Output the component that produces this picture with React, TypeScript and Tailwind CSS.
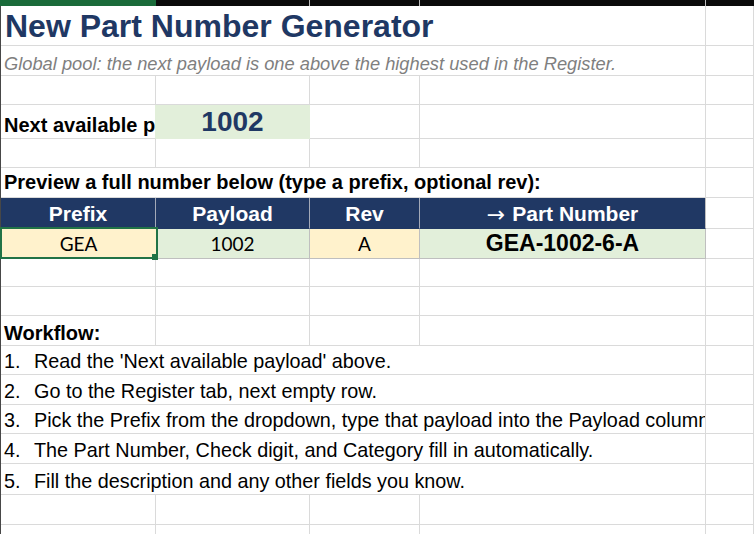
import React from "react";
import { twMerge } from "tailwind-merge";

// column widths incl. right gridline
const A = "w-[155px]";
const B = "w-[154px]";
const C = "w-[110px]";
const D = "w-[286px]";
const AD = "w-[705px]";

type CellProps = {
  w?: string;
  className?: string;
  children?: React.ReactNode;
};

function Cell({ w = "flex-1", className, children }: CellProps) {
  return (
    <div
      className={twMerge(
        "h-full shrink-0 border-r border-b border-[#dadada] flex items-end overflow-hidden whitespace-nowrap",
        w,
        className
      )}
    >
      {children}
    </div>
  );
}

function EmptyRow({ h }: { h: string }) {
  return (
    <div className={`flex ${h}`}>
      <Cell w={A} />
      <Cell w={B} />
      <Cell w={C} />
      <Cell w={D} />
      <Cell />
    </div>
  );
}

const STEPS = [
  "Read the 'Next available payload' above.",
  "Go to the Register tab, next empty row.",
  "Pick the Prefix from the dropdown, type that payload into the Payload column.",
  "The Part Number, Check digit, and Category fill in automatically.",
  "Fill the description and any other fields you know.",
];
const STEP_HEIGHTS = ["h-[29px]", "h-[30px]", "h-[29px]", "h-[30px]", "h-[31px]"];

export default function App() {
  return (
    <div className="w-[754px] h-[534px] overflow-hidden bg-white text-black font-['Liberation_Sans',Arial,sans-serif]">
      {/* column header strip (cut off) */}
      <div className="flex h-[6px] bg-[#0b0b0b]">
        <div className="w-[156px] shrink-0 bg-[#1a6b3a]" />
        <div className="w-[154px] shrink-0 border-r border-[#bdbdbd]" />
        <div className="w-[110px] shrink-0 border-r border-[#bdbdbd]" />
        <div className="w-[286px] shrink-0 border-r border-[#bdbdbd]" />
      </div>

      <div className="border-l border-[#474747]">
        {/* title */}
        <div className="flex h-[40px]">
          <Cell w={AD} className="pl-[4px] pb-[3px]">
            <span className="text-[32px] leading-none font-bold text-[#1f3864]">
              New Part Number Generator
            </span>
          </Cell>
          <Cell />
        </div>
        <div className="flex h-[30px]">
          <Cell w={AD} className="pl-[3px] pb-[2px]">
            <span className="text-[18.3px] leading-none italic text-[#7f7f7f]">
              Global pool: the next payload is one above the highest used in the Register.
            </span>
          </Cell>
          <Cell />
        </div>
        <EmptyRow h="h-[29px]" />

        {/* next available */}
        <div className="flex h-[34px]">
          <Cell w={A} className="pl-[3px] pb-[3px] border-r-[#e2efda]">
            <span className="text-[20px] leading-none font-bold">Next available payload</span>
          </Cell>
          <Cell w={B} className="justify-center pb-[2px] bg-[#e2efda] border-[#e2efda]">
            <span className="text-[28px] leading-none font-bold text-[#1f3864]">1002</span>
          </Cell>
          <Cell w={C} />
          <Cell w={D} />
          <Cell />
        </div>
        <EmptyRow h="h-[29px]" />

        {/* preview */}
        <div className="flex h-[30px]">
          <Cell w={AD} className="pl-[3px] pb-[5px]">
            <span className="text-[20px] leading-none font-bold">
              Preview a full number below (type a prefix, optional rev):
            </span>
          </Cell>
          <Cell />
        </div>
        <div className="flex h-[31px] text-white text-[21px] font-bold">
          <Cell w={A} className="items-center justify-center bg-[#203864] border-b-[#203864] border-r-[#a3a9b8]">
            <span className="leading-none">Prefix</span>
          </Cell>
          <Cell w={B} className="items-center justify-center bg-[#203864] border-b-[#203864] border-r-[#a3a9b8]">
            <span className="leading-none">Payload</span>
          </Cell>
          <Cell w={C} className="items-center justify-center bg-[#203864] border-b-[#203864] border-r-[#a3a9b8]">
            <span className="leading-none">Rev</span>
          </Cell>
          <Cell w={D} className="items-center justify-center bg-[#203864] border-b-[#203864] border-r-[#bfbfbf]">
            <span className="leading-none shrink-0 font-['DejaVu_Sans',sans-serif] font-normal text-[22px] mr-[7px] mt-[3px]">→</span>
            <span className="leading-none shrink-0">Part Number</span>
          </Cell>
          <Cell />
        </div>
        <div className="flex h-[30px] font-['Lato',sans-serif] text-[19px]">
          <div className={`${A} relative h-full shrink-0 flex items-center justify-center bg-[#fff2cc] border-b border-[#bfbfbf]`}>
            <span className="leading-none">GEA</span>
            <div className="absolute left-[-1px] top-[-2px] w-[158px] h-[32px] border-2 border-[#217346]" />
            <div className="absolute left-[151px] top-[25px] w-[6px] h-[6px] bg-[#217346] z-10" />
          </div>
          <Cell w={B} className="items-center justify-center bg-[#e2efda] border-[#bfbfbf]">
            <span className="leading-none">1002</span>
          </Cell>
          <Cell w={C} className="items-center justify-center bg-[#fff2cc] border-[#bfbfbf]">
            <span className="leading-none">A</span>
          </Cell>
          <Cell w={D} className="items-center justify-center bg-[#e2efda] border-[#bfbfbf] font-['Liberation_Sans',Arial,sans-serif]">
            <span className="text-[23px] leading-none font-bold">GEA-1002-6-A</span>
          </Cell>
          <Cell />
        </div>
        <EmptyRow h="h-[28px]" />
        <EmptyRow h="h-[29px]" />

        {/* workflow */}
        <div className="flex h-[30px]">
          <Cell w={A} className="pl-[3px] pb-[2px]">
            <span className="text-[20px] leading-none font-bold">Workflow:</span>
          </Cell>
          <Cell w={B} />
          <Cell w={C} />
          <Cell w={D} />
          <Cell />
        </div>
        {STEPS.map((s, i) => (
          <div key={i} className={`flex ${STEP_HEIGHTS[i]}`}>
            <Cell w={AD} className="pl-[3px] pb-[2px] text-[19.8px]">
              <span className="leading-none inline-block shrink-0 w-[30px]">{i + 1}.</span>
              <span className="leading-none shrink-0">{s}</span>
            </Cell>
            <Cell />
          </div>
        ))}
        <EmptyRow h="h-[30px]" />
        <EmptyRow h="h-[30px]" />
      </div>
    </div>
  );
}
